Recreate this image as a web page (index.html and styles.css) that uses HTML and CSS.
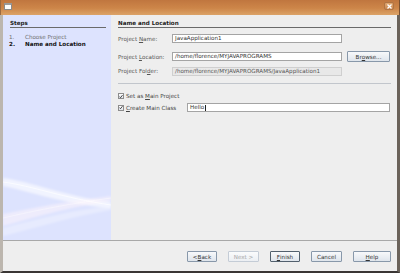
FILE: index.html
```html
<!DOCTYPE html>
<html>
<head>
<meta charset="utf-8">
<link rel="stylesheet" href="styles.css">
</head>
<body>
<div class="window">
  <div class="titlebar">
    <span class="appicon"></span>
    <span class="close"><svg width="7" height="7" viewBox="0 0 7 7"><path d="M1.5 1.5 L5.5 5.5 M5.5 1.5 L1.5 5.5" stroke="#fff" stroke-width="1.3"/></svg></span>
  </div>
  <div class="frame">
    <div class="main">
      <div class="steps">
        <div class="head">Steps</div>
        <ol class="steplist">
          <li class="step"><span class="num">1.</span><span>Choose Project</span></li>
          <li class="step current"><span class="num">2.</span><span>Name and Location</span></li>
        </ol>
        <svg class="waves" width="108" height="72" viewBox="0 0 108 72">
          <defs>
            <filter id="soft" x="-10%" y="-50%" width="120%" height="200%"><feGaussianBlur stdDeviation="1.2"/></filter>
          </defs>
          <g filter="url(#soft)">
            <path d="M0 10 C30 14 60 28 108 34 L108 40 C60 36 30 24 0 18 Z" fill="#ffffff" opacity="0.6"/>
            <path d="M0 46 C30 40 60 34 108 28 L108 33 C60 40 30 50 0 58 Z" fill="#fff6fc" opacity="0.5"/>
            <path d="M0 60 C40 50 70 42 108 38 L108 42 C70 48 40 58 0 68 Z" fill="#ffffff" opacity="0.3"/>
          </g>
          <path d="M0 14 C30 18 60 30 108 37" stroke="#ffffff" stroke-width="0.8" fill="none" opacity="0.8"/>
          <path d="M0 50 C35 42 65 36 108 30" stroke="#ffffff" stroke-width="0.6" fill="none" opacity="0.6"/>
        </svg>
      </div>
      <div class="content">
        <div class="head">Name and Location</div>
        <div class="row r1">
          <span class="label">Project <u>N</u>ame:</span>
          <span class="field">JavaApplication1</span>
        </div>
        <div class="row r2">
          <span class="label">Project <u>L</u>ocation:</span>
          <span class="field">/home/florence/MYJAVAPROGRAMS</span>
          <span class="btn browse">Br<u>o</u>wse...</span>
        </div>
        <div class="row r3">
          <span class="label">Project Fol<u>d</u>er:</span>
          <span class="field disabled">/home/florence/MYJAVAPROGRAMS/JavaApplication1</span>
        </div>
        <div class="sep"></div>
        <div class="row c1">
          <span class="check"><svg width="5" height="5" viewBox="0 0 5 5"><path d="M0.6 2.6 L1.9 4 L4.4 0.8" stroke="#222" stroke-width="1" fill="none"/></svg></span>
          <span class="clabel">Set as <u>M</u>ain Project</span>
        </div>
        <div class="row c2">
          <span class="check"><svg width="5" height="5" viewBox="0 0 5 5"><path d="M0.6 2.6 L1.9 4 L4.4 0.8" stroke="#222" stroke-width="1" fill="none"/></svg></span>
          <span class="clabel wide"><u>C</u>reate Main Class</span>
          <span class="field long">Hello<span class="caret"></span></span>
        </div>
      </div>
    </div>
    <div class="footer">
      <span class="btn b-back">&lt; <u>B</u>ack</span>
      <span class="btn b-next disabled">Next &gt;</span>
      <span class="btn b-finish default"><u>F</u>inish</span>
      <span class="btn b-cancel">Cancel</span>
      <span class="btn b-help"><u>H</u>elp</span>
    </div>
  </div>
</div>
</body>
</html>
```

FILE: styles.css
```css
* { box-sizing: border-box; }
html, body { margin: 0; padding: 0; }
body {
  width: 400px;
  height: 273px;
  overflow: hidden;
  font-family: "DejaVu Sans", sans-serif;
  font-size: 5.6px;
  color: #3a3a3a;
  background: #eeeeee;
}
.window {
  width: 400px;
  height: 273px;
  display: flex;
  flex-direction: column;
}
.titlebar {
  height: 15px;
  flex: none;
  background: linear-gradient(#c0763f, #cd8649 55%, #dca368);
  border-left: 1px solid #9c6a40;
  border-right: 1px solid #7a5030;
  display: flex;
  align-items: flex-start;
  justify-content: space-between;
  padding: 3px 5px 0 3px;
}
.appicon {
  width: 8px;
  height: 7px;
  background: #fdfdfd;
  border: 1px solid #8a8a8a;
  border-top: 2px solid #9a9a9a;
}
.close {
  width: 10px;
  height: 8px;
  margin-top: -1px;
  border-radius: 2px;
  background: linear-gradient(#e0a872, #c88650);
  border: 1px solid #b07444;
  display: flex;
  align-items: center;
  justify-content: center;
}
.frame {
  flex: 1;
  display: flex;
  flex-direction: column;
  border-left: 3px solid #bcb6ae;
  border-right: 3px solid #6a625a;
  border-bottom: 2px solid #3a3634;
  background: #eeeeee;
}
.main {
  height: 226px;
  flex: none;
  display: flex;
  border-bottom: 1px solid #a8a8a8;
}
.steps {
  width: 108px;
  flex: none;
  background: #dde3fe;
  padding: 5px 5px 0 7px;
  position: relative;
  overflow: hidden;
}
.waves {
  position: absolute;
  left: 0;
  bottom: 0;
}
.head {
  height: 8px;
  line-height: 7px;
  font-weight: bold;
  color: #222;
  border-bottom: 1px solid #6a6a6a;
}
.steplist {
  list-style: none;
  margin: 6px 0 0 0;
  padding: 0;
}
.step {
  display: flex;
  line-height: 6.5px;
  color: #707070;
  margin-left: -1px;
}
.step .num { width: 16px; }
.step.current { color: #111; font-weight: bold; }
.content {
  flex: 1;
  padding: 5px 6px 0 7px;
  display: flex;
  flex-direction: column;
}
.row {
  display: flex;
  align-items: center;
  flex: none;
}
.r1 { margin-top: 5px; height: 11px; }
.r2 { margin-top: 7px; height: 11px; }
.r3 { margin-top: 4px; height: 10px; }
.label {
  width: 54px;
  flex: none;
  color: #555;
}
.field {
  width: 170px;
  height: 9px;
  line-height: 7px;
  background: #fff;
  border: 1px solid #a4a4a4;
  padding-left: 2px;
  color: #333;
  white-space: nowrap;
  overflow: hidden;
  display: flex;
  align-items: center;
}
.field.disabled {
  background: #e8e8e8;
  border-color: #cfcfcf;
  color: #555;
}
.field.long { width: 203px; }
.caret { display: inline-block; width: 1px; height: 6px; background: #222; margin-left: 0.5px; }
.sep {
  flex: none;
  margin-top: 7px;
  height: 1px;
  background: #c2c6cc;
}
.c1 { margin-top: 8px; height: 8px; }
.c2 { margin-top: 3px; height: 9px; }
.check {
  width: 6px;
  height: 6px;
  flex: none;
  border: 1px solid #8c8c8c;
  background: linear-gradient(#ffffff, #dfe3ea);
  display: flex;
  align-items: center;
  justify-content: center;
  margin-right: 2px;
}
.check svg { display: block; }
.clabel { color: #444; }
.clabel.wide { width: 61px; flex: none; }
.btn {
  height: 11px;
  display: flex;
  align-items: center;
  justify-content: center;
  border: 1px solid #8898aa;
  border-radius: 1px;
  background: linear-gradient(#f8f9fb, #dfe5ec);
  color: #333;
  flex: none;
}
.browse { width: 43px; margin-left: 5px; }
.footer {
  flex: 1;
  display: flex;
  justify-content: flex-end;
  align-items: flex-start;
  padding: 10px 6px 0 0;
  gap: 11px;
}
.b-back { width: 30px; }
.b-next { width: 31px; }
.b-finish { width: 30px; }
.b-cancel { width: 31px; }
.b-help { width: 38px; }
.btn.disabled { border-color: #c4ccd6; color: #a8a8a8; background: linear-gradient(#fafbfc, #eceff3); }
.btn.default { border-color: #52606e; }
u { text-decoration: underline; text-underline-offset: 0.5px; }
```
